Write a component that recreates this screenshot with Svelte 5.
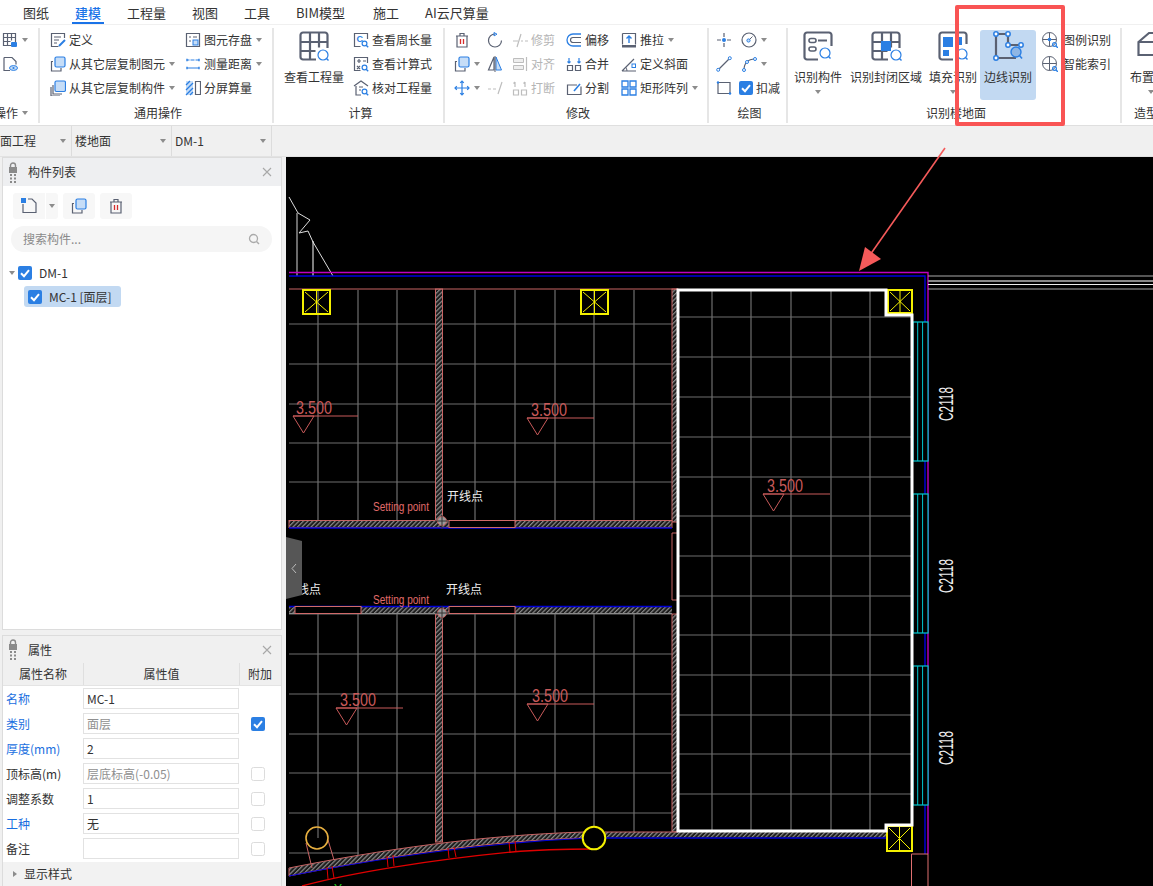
<script lang="ts">
    const D = "#5a6172";
    const B = "#2b7fe3";
    const L = "#c6ddf7";
    const G = "#bdbdbd";
    const line = (d: string, c = D, w = 1.2) =>
        `<path d="${d}" fill="none" stroke="${c}" stroke-width="${w}"/>`;
    const lens = (x: number, y: number, r = 2.4, c = B) =>
        `<circle cx="${x}" cy="${y}" r="${r}" fill="none" stroke="${c}" stroke-width="1.2"/>` +
        line(`M${x + r * 0.7} ${y + r * 0.7}l2 2`, c, 1.4);
    const frontBox = (x: number, y: number, s: number) =>
        `<rect x="${x}" y="${y}" width="${s}" height="${s}" rx="1.5" fill="${L}" stroke="${B}" stroke-width="1.2"/>`;

    // 16px ribbon icons
    const small: Record<string, string> = {
        gridlock:
            line("M1.5 1.5h12v12h-12zM5.5 1.5v12M9.5 1.5v7M1.5 5.5h12M1.5 9.5h7") +
            `<rect x="9" y="10" width="6" height="5" rx="1" fill="${B}"/>`,
        fileeye:
            line("M2 1.5h8l4 4v3M2 1.5v13h6") +
            `<ellipse cx="11.5" cy="12" rx="4" ry="2.4" fill="${L}" stroke="${B}"/><circle cx="11.5" cy="12" r="1.1" fill="${B}"/>`,
        define:
            line("M14.5 6V1.5h-13v13h7M4 5h7M4 8h5M4 11h3") +
            line("M9 14l6-6", B, 2),
        copyfloor:
            line("M3 5.5H1.5v9.5h9.5v-3") + frontBox(5, 1, 10),
        copycomp:
            line("M1 7v9h9M3 5v9h9") + frontBox(5, 1, 10.5),
        save:
            line("M1.5 1.5h13v13h-13zM4 5h2M8 5h4M4 9h2") +
            `<rect x="8" y="8" width="5" height="5" fill="${L}" stroke="${B}"/>`,
        measure:
            line("M2 4h12M2 12h12", B, 1) +
            line("M2 2.8v2.4M14 2.8v2.4M2 10.8v2.4M14 10.8v2.4", B, 1.4) +
            line("M4 4h2M9 4h2", "#fff", 1),
        split:
            `<rect x="1" y="1" width="7" height="14" fill="${L}"/>` +
            line("M1 5l4-4M1 10l7-7M1 15l7-7M5 15l3-3", B, 1.3) +
            line("M10.5 1.5h5v13h-5z"),
        perim:
            line("M14.5 7V1.5h-13v13h6") +
            `<text x="3.5" y="10" font-size="9" font-weight="700" font-family="Liberation Sans" fill="${B}">C</text>` +
            lens(11.5, 11.5),
        formula:
            line("M14.5 7V1.5h-13v13h6M4 5h4M6 3v4M4 10l3 3M7 10l-3 3M10 5h3") +
            lens(11.5, 11.5),
        house:
            line("M1 6l7-5 7 5M3 6v9h5M6 7h4M6 10h2") + lens(11.5, 11.5),
        trash:
            line("M2 4h12M6 4V1.5h4V4M3 4v11h10V4") +
            line("M6.5 7v5M9.5 7v5", "#d62b2b", 1.3),
        rotate:
            line("M8 2a6.5 6.5 0 1 0 6.5 6.5") + line("M7 .5l3 1.7-3 1.7z", B, 1),
        trim: line("M1 9h5M9 9h2M13 9h3M5 15L9 2", G),
        offset:
            line("M15 2H7a6 6 0 0 0 0 12h8", B, 1.3) +
            line("M15 5.5H7a2.5 2.5 0 0 0 0 5h8", D, 1.2),
        push:
            line("M1.5 1.5h13v11") +
            line("M1.5 1.5v11") +
            `<rect x="1" y="13" width="14" height="2.5" fill="${D}"/>` +
            line("M8 11V4M5.5 6.5L8 4l2.5 2.5", B, 1.4),
        copy: line("M3 5.5H1.5v9.5h9.5v-3") + frontBox(5, 1, 10),
        mirror:
            `<path d="M9 1l5.5 13H9z" fill="${L}" stroke="${B}"/>` +
            line("M7 1L1.5 14H7z") +
            line("M8 0v16", D, 1),
        align:
            line("M14.5 1v14", G) +
            `<path d="M1.5 2.5h10v4h-10zM1.5 9.5h10v4h-10z" fill="#eee" stroke="${G}"/>`,
        merge:
            line("M1.5 9.5h5v5h-5zM9.5 9.5h5v5h-5z") +
            line("M3 2v5M1.5 5.5L3 7l1.5-1.5M13 2v5M11.5 5.5L13 7l1.5-1.5", B, 1.2),
        slope:
            line("M1 15h14M1 15L13 3") +
            line("M6 15a6 6 0 0 0-1.5-4", D, 1) +
            `<rect x="11" y="8" width="3.5" height="3.5" fill="none" stroke="${B}"/>`,
        move:
            line("M8 1v14M1 8h14M6.2 2.8L8 1l1.8 1.8M6.2 13.2L8 15l1.8-1.8M2.8 6.2L1 8l1.8 1.8M13.2 6.2L15 8l-1.8 1.8", B, 1.2),
        extend: line("M1 9h3M6 9h3M11 14l4-12", G),
        breakIcon:
            line("M1.5 10h5v5h-5zM9.5 10h5v5h-5z", G) +
            line("M3 2v5M13 2v5M1.5 3.5L3 2M11.5 3.5L13 2", G),
        cut:
            line("M15 6.5v8H1.5v-9.5H11") + line("M8 11l6-7", B, 1.6),
        array:
            `<path d="M1 1h6v6H1zM9 1h6v6H9zM1 9h6v6H1zM9 9h6v6H9z" fill="#fff" stroke="${B}" stroke-width="1.3"/>`,
        point:
            line("M8 1v4M8 11v4M1 8h4M11 8h4", D, 1.2) +
            `<circle cx="8" cy="8" r="2" fill="${B}"/>`,
        circle:
            `<circle cx="8" cy="8" r="7" fill="none" stroke="${D}" stroke-width="1.2"/>` +
            line("M8 8l3.5-3.5", D, 1) +
            `<circle cx="7.5" cy="8.5" r="1.6" fill="${L}" stroke="${B}"/>`,
        lineIcon:
            line("M2 14L14 2") +
            `<circle cx="2.2" cy="13.8" r="1.5" fill="#fff" stroke="${B}"/><circle cx="13.8" cy="2.2" r="1.5" fill="#fff" stroke="${B}"/>`,
        arc:
            line("M3 14C3 7 7 3 14 3") +
            `<circle cx="3" cy="14" r="1.5" fill="#fff" stroke="${B}"/><circle cx="14" cy="3" r="1.5" fill="#fff" stroke="${B}"/><circle cx="6" cy="6" r="1.5" fill="#fff" stroke="${B}"/>`,
        rect:
            line("M2 2.5h12v11H2z") +
            `<circle cx="2" cy="2.5" r="1.2" fill="${B}"/><circle cx="14" cy="13.5" r="1.2" fill="${B}"/>`,
        legend:
            `<circle cx="7.5" cy="7.5" r="7" fill="none" stroke="${D}"/>` +
            line("M7.5 .5v14M.5 7.5h14", D, 1) +
            `<circle cx="7.5" cy="7.5" r="1.8" fill="${B}"/>` +
            lens(12.5, 12.5, 1.9),
        smart:
            `<circle cx="7.5" cy="7.5" r="7" fill="none" stroke="${D}"/>` +
            line("M7.5 .5v14M.5 7.5h14", D, 1) +
            lens(12.5, 12.5, 1.9),
    };

    // 31px ribbon icons
    const large: Record<string, string> = {
        grid:
            line("M1.5 4a2.5 2.5 0 0 1 2.5-2.5h22a2.5 2.5 0 0 1 2.5 2.5v13M1.5 4v22a2.5 2.5 0 0 0 2.5 2.5h13M1.5 11h27M1.5 20h15M11 1.5v27M20 1.5v15", D, 2.2) +
            lens(24, 24, 5, B),
        form:
            line("M28.5 15V4a2.5 2.5 0 0 0-2.5-2.5H4A2.5 2.5 0 0 0 1.5 4v22A2.5 2.5 0 0 0 4 28.5h11", D, 2.2) +
            `<rect x="6" y="7.5" width="7" height="4" rx="2" fill="none" stroke="${D}" stroke-width="1.6"/><rect x="6" y="16" width="7" height="4" rx="2" fill="none" stroke="${D}" stroke-width="1.6"/>` +
            line("M15 9.5h9", D, 2) +
            lens(22, 22, 5, B),
        gridfill:
            line("M1.5 4a2.5 2.5 0 0 1 2.5-2.5h22a2.5 2.5 0 0 1 2.5 2.5v13M1.5 4v22a2.5 2.5 0 0 0 2.5 2.5h13M1.5 11h27M1.5 20h15M11 1.5v27M20 1.5v15", D, 2.2) +
            `<rect x="10" y="10" width="10" height="10" fill="${B}"/>` +
            lens(25, 24, 5, B),
        fill:
            line("M28.5 13V4a2.5 2.5 0 0 0-2.5-2.5H4A2.5 2.5 0 0 0 1.5 4v22A2.5 2.5 0 0 0 4 28.5h11", D, 2.2) +
            `<rect x="5" y="6" width="10" height="10" fill="${B}"/><rect x="5" y="19" width="6" height="6" fill="${B}"/><rect x="20" y="6" width="4" height="8" fill="${B}"/>` +
            lens(24, 23, 5, B),
        edge:
            line("M3 3h12M3 3v24h20M15 3v11h13v2", D, 2.2) +
            `<circle cx="23" cy="21" r="5" fill="#8fb6e4" stroke="${B}" stroke-width="1.4"/>` +
            line("M26.5 24.5l2.5 3", B, 1.6) +
            [[3, 3], [15, 3], [15, 14], [28, 14], [3, 27]]
                .map(([x, y]) => `<circle cx="${x}" cy="${y}" r="2.2" fill="#fff" stroke="${B}" stroke-width="1.5"/>`)
                .join(""),
        cube: line("M1.5 11L12 2h18v22H1.5zM1.5 11H20v13M20 11L30 2", D, 2.2),
    };

    const rows = [
        { name: "名称", value: "MC-1", blue: true, muted: false, check: null },
        { name: "类别", value: "面层", blue: true, muted: true, check: true },
        { name: "厚度(mm)", value: "2", blue: true, muted: false, check: null },
        { name: "顶标高(m)", value: "层底标高(-0.05)", blue: false, muted: true, check: false },
        { name: "调整系数", value: "1", blue: false, muted: false, check: false },
        { name: "工种", value: "无", blue: true, muted: false, check: false },
        { name: "备注", value: "", blue: false, muted: false, check: false },
    ];

    const tabs = ["图纸", "建模", "工程量", "视图", "工具", "BIM模型", "施工", "AI云尺算量"];

    // drawing coordinates below are the page's own, see the svg viewBox
    const gridX = [318, 358, 397, 475, 515, 555, 594, 634];
    const upperY = [324, 364, 404, 443, 482, 522];
    const lowerY = [614, 654, 694, 734, 773, 813];
    const lowerEnd: Record<number, number> = { 318: 838, 358: 855, 397: 849, 475: 841, 515: 836, 555: 834, 594: 828, 634: 832 };
    const roomX = [712, 751, 791, 831, 870];
    const roomY = [317, 357, 397, 437, 477, 516, 556, 596, 635, 675, 715, 754, 794];
    const levels = [
        { x: 296, y: 414, lx: 293, lw: 65, ly: 416 },
        { x: 531, y: 416, lx: 527, lw: 67, ly: 418 },
        { x: 767, y: 492, lx: 763, lw: 67, ly: 494 },
        { x: 340, y: 706, lx: 336, lw: 67, ly: 708 },
        { x: 532, y: 702, lx: 527, lw: 67, ly: 704 },
    ];
    const columns = [
        [303, 290, 27, 24],
        [581, 290, 27, 24],
        [888, 290, 24, 23],
        [887, 826, 25, 25],
    ];
    const windows = [322, 494, 666];
    const mullions = [
        "M327 867l1 12M332 866l2 12",
        "M387 856l1 11M393 855l1 11",
        "M448 848l1 10M454 847l2 10",
        "M509 842l1 10M515 841l1 11",
    ];
</script>

{#snippet item(icon: string, label = "", caret = false, off = false)}
    <div class="item" class:off>
        <svg class="ico" viewBox="0 0 16 16">{@html small[icon]}</svg>
        {#if label}<span>{label}</span>{/if}
        {#if caret}<i class="caret"></i>{/if}
    </div>
{/snippet}

{#snippet big(icon: string, label: string, caret = false, active = false)}
    <div class="big" class:active>
        <svg class="big-ico" viewBox="0 0 31 31">{@html large[icon]}</svg>
        <span>{label}</span>
        {#if caret}<i class="caret"></i>{/if}
    </div>
{/snippet}

{#snippet panelHead(title: string)}
    <header class="panel-head">
        <svg class="grip" viewBox="0 0 10 21">
            <path d="M2.500 6V3.500a2.500 2.500 0 0 1 5 0V6" fill="none" stroke="#8a8a8a" stroke-width="1.4" />
            <rect x="1" y="5" width="8" height="6" fill="#8a8a8a" />
            <path d="M2 13h2M6 13h2M2 16.500h2M6 16.500h2M2 20h2M6 20h2" stroke="#8a8a8a" stroke-width="2" />
        </svg>
        <span>{title}</span>
        <svg class="close" viewBox="0 0 10 10"><path d="M1 1l8 8M9 1l-8 8" stroke="#a8a8a8" stroke-width="1.1" /></svg>
    </header>
{/snippet}

{#snippet tick(on = true)}
    <svg class="tick" viewBox="0 0 14 14">
        {#if on}
            <rect width="14" height="14" rx="2" fill="#2b7fe3" />
            <path d="M3 7.200l3 3 5-6" fill="none" stroke="#fff" stroke-width="2" />
        {:else}
            <rect x=".5" y=".5" width="13" height="13" rx="2" fill="#fff" stroke="#dcdcdc" />
        {/if}
    </svg>
{/snippet}

<div class="app">
    <nav class="tabs">
        {#each tabs as tab}
            <span class="tab" class:current={tab === "建模"} class:wide={tab === "BIM模型"}>{tab}</span>
        {/each}
    </nav>

    <section class="ribbon">
        <div class="group g-ops">
            <div class="body stack">
                {@render item("gridlock", "", true)}
                {@render item("fileeye")}
            </div>
            <div class="cap">操作<i class="caret"></i></div>
        </div>

        <div class="group g-common">
            <div class="body">
                <div class="stack c1">
                    {@render item("define", "定义")}
                    {@render item("copyfloor", "从其它层复制图元", true)}
                    {@render item("copycomp", "从其它层复制构件", true)}
                </div>
                <div class="stack">
                    {@render item("save", "图元存盘", true)}
                    {@render item("measure", "测量距离", true)}
                    {@render item("split", "分屏算量")}
                </div>
            </div>
            <div class="cap">通用操作</div>
        </div>

        <div class="group g-calc">
            <div class="body">
                {@render big("grid", "查看工程量")}
                <div class="stack">
                    {@render item("perim", "查看周长量")}
                    {@render item("formula", "查看计算式")}
                    {@render item("house", "核对工程量")}
                </div>
            </div>
            <div class="cap">计算</div>
        </div>

        <div class="group g-edit">
            <div class="body">
                <div class="stack e1">
                    {@render item("trash")}
                    {@render item("copy", "", true)}
                    {@render item("move", "", true)}
                </div>
                <div class="stack e2">
                    {@render item("rotate")}
                    {@render item("mirror")}
                    {@render item("extend", "", false, true)}
                </div>
                <div class="stack e3">
                    {@render item("trim", "修剪", false, true)}
                    {@render item("align", "对齐", false, true)}
                    {@render item("breakIcon", "打断", false, true)}
                </div>
                <div class="stack e4">
                    {@render item("offset", "偏移")}
                    {@render item("merge", "合并")}
                    {@render item("cut", "分割")}
                </div>
                <div class="stack">
                    {@render item("push", "推拉", true)}
                    {@render item("slope", "定义斜面")}
                    {@render item("array", "矩形阵列", true)}
                </div>
            </div>
            <div class="cap">修改</div>
        </div>

        <div class="group g-draw">
            <div class="body">
                <div class="stack d1">
                    {@render item("point")}
                    {@render item("lineIcon")}
                    {@render item("rect")}
                </div>
                <div class="stack">
                    {@render item("circle", "", true)}
                    {@render item("arc", "", true)}
                    <div class="item deduct">{@render tick()}<span>扣减</span></div>
                </div>
            </div>
            <div class="cap">绘图</div>
        </div>

        <div class="group g-recog">
            <div class="body">
                {@render big("form", "识别构件", true)}
                {@render big("gridfill", "识别封闭区域")}
                {@render big("fill", "填充识别", true)}
                {@render big("edge", "边线识别", false, true)}
                <div class="stack r1">
                    {@render item("legend", "图例识别")}
                    {@render item("smart", "智能索引")}
                </div>
            </div>
            <div class="cap">识别楼地面</div>
        </div>

        <div class="group g-shape">
            <div class="body">{@render big("cube", "布置", true)}</div>
            <div class="cap">造型</div>
        </div>
    </section>

    <div class="combos">
        <div class="combo first"><span>楼地面工程</span><i class="caret"></i></div>
        <div class="combo"><span>楼地面</span><i class="caret"></i></div>
        <div class="combo"><span>DM-1</span><i class="caret"></i></div>
    </div>

    <main class="main">
        <aside class="side">
            <section class="panel list">
                {@render panelHead("构件列表")}
                <div class="tools">
                    <div class="tool new">
                        <svg viewBox="0 0 16 16" class="tool-ico">
                            <path d="M2 6v8.500h13V5l-4-4H7" fill="none" stroke={D} stroke-width="1.2" />
                            <rect x="0" y="0" width="5" height="5" fill={B} />
                        </svg>
                    </div>
                    <div class="tool more"><i class="caret"></i></div>
                    <div class="tool"><svg viewBox="0 0 16 16" class="tool-ico">{@html small.copy}</svg></div>
                    <div class="tool"><svg viewBox="0 0 16 16" class="tool-ico">{@html small.trash}</svg></div>
                </div>
                <div class="search">
                    <span>搜索构件...</span>
                    <svg viewBox="0 0 12 12"><circle cx="5.500" cy="5.500" r="4" fill="none" stroke="#aaa" stroke-width="1.3" /><path d="M8.500 8.500l2.500 2.500" stroke="#aaa" stroke-width="1.4" /></svg>
                </div>
                <div class="tree">
                    <div class="node"><i class="caret"></i>{@render tick()}<span>DM-1</span></div>
                    <div class="node leaf">{@render tick()}<span>MC-1 [面层]</span></div>
                </div>
            </section>

            <section class="panel props">
                {@render panelHead("属性")}
                <div class="prop-head">
                    <span>属性名称</span><span>属性值</span><span>附加</span>
                </div>
                <div class="prop-rows">
                    {#each rows as row}
                        <div class="prop-row">
                            <span class="prop-name" class:blue={row.blue}>{row.name}</span>
                            <span class="prop-value" class:muted={row.muted}>{row.value}</span>
                            <span class="prop-check">
                                {#if row.check !== null}{@render tick(row.check)}{/if}
                            </span>
                        </div>
                    {/each}
                </div>
                <footer class="prop-foot"><i class="side-caret"></i>显示样式</footer>
            </section>
        </aside>

        <div class="canvas">
            <svg class="cad" viewBox="286 157 867 729" fill="none">
                <defs>
                    <pattern id="hatch" width="3.2" height="3.2" patternUnits="userSpaceOnUse" patternTransform="rotate(-45)">
                        <rect width="3.2" height="3.2" fill="#1c1c1c" />
                        <rect width="3.2" height="1.2" fill="#8a8a8a" />
                    </pattern>
                </defs>

                <!-- north marker -->
                <path d="M289 197l9 16 12 7-11 13 9-2 5 11 20 34" stroke="#ddd" />
                <path d="M297 213v63" stroke="#999" stroke-width="1.4" />
                <path d="M313 241v35" stroke="#fff" />

                <!-- outer lines -->
                <path d="M289 272.500h639V854" stroke="#c000c0" stroke-width="1.4" />
                <path d="M289 276h636v578" stroke="#0000e0" stroke-width="1.4" />
                <path d="M928 276h225M928 289h225" stroke="#aaa" />
                <path d="M928 281h225" stroke="#888" stroke-width="2" />
                <path d="M928 284.500h225" stroke="#eee" />

                <!-- floor grid -->
                <g stroke="#6e6e6e" stroke-width="1.2">
                    {#each gridX as x}
                        <path d="M{x} 290V522M{x} 614V{lowerEnd[x]}" />
                    {/each}
                    {#each upperY as y}
                        <path d="M289 {y}H672" />
                    {/each}
                    {#each lowerY as y}
                        <path d="M289 {y}H672" />
                    {/each}
                    <path d="M289 853h70" />
                    {#each roomX as x}
                        <path d="M{x} 290V830" />
                    {/each}
                    {#each roomY as y}
                        <path d="M678 {y}H912" />
                    {/each}
                </g>

                <!-- walls -->
                <g stroke="#c86464" fill="url(#hatch)">
                    <rect x="435.500" y="289" width="7" height="233" />
                    <rect x="672" y="289" width="6" height="233" />
                    <rect x="435.500" y="614" width="7" height="228" />
                    <rect x="672" y="614" width="6" height="218" />
                    <rect x="289" y="520.500" width="383" height="7" />
                    <path d="M289 868C380 850 480 835 585 832V838C480 841 380 858 289 876Z" />
                </g>
                <rect x="289" y="606" width="383" height="7" fill="url(#hatch)" />
                <rect x="605" y="832" width="281" height="5.500" fill="url(#hatch)" />
                <path d="M605 832h73" stroke="#c86464" />
                <path d="M289 289h389" stroke="#c86464" stroke-width="1.2" />
                <path d="M672 533h6v67h-6z" stroke="#c86464" />
                <path d="M289 613.500h383" stroke="#8a8a8a" />
                <path d="M289 528h383M289 606.500h383M605 838h281" stroke="#0000d8" stroke-width="1.4" />
                <path d="M289 876C380 858 480 843 590 838" stroke="#0000d8" stroke-width="1.2" />
                <g stroke="#d06a6a" fill="#000">
                    <rect x="449" y="520.500" width="66" height="7" />
                    <rect x="449" y="606.500" width="66" height="7" />
                    <rect x="295" y="606.500" width="66" height="7" />
                </g>
                <circle cx="442" cy="521" r="4.500" fill="#999" stroke="#c86464" />
                <circle cx="442" cy="613" r="4.500" fill="#999" stroke="#c86464" />
                <path d="M442 515v14M435 521h14M442 606v14M435 613h14" stroke="#333" />

                <!-- curved front -->
                <path d="M302 886C350 873 430 860 512 852C545 849 570 849 595 849" stroke="#e00000" stroke-width="1.3" />
                {#each mullions as d}
                    <path {d} stroke="#e00000" />
                {/each}
                <path d="M306 843l6 25M328 840l6 20" stroke="#c86464" />
                <circle cx="317" cy="838" r="11" stroke="#e8b040" stroke-width="1.6" />
                <circle cx="594" cy="838" r="11.300" fill="#000" stroke="#f4f000" stroke-width="2" />
                <text x="334" y="893" class="axis">Y</text>

                <!-- level marks -->
                {#each levels as l}
                    <text x={l.x} y={l.y} class="level" textLength="36" lengthAdjust="spacingAndGlyphs">3.500</text>
                    <path d="M{l.lx} {l.ly}h{l.lw}M{l.lx} {l.ly}h21l-10.500 17z" stroke="#c85a5a" />
                {/each}

                <!-- columns -->
                {#each columns as [x, y, w, h]}
                    <rect {x} {y} width={w} height={h} stroke="#f4f000" stroke-width="2" />
                    <path d="M{x + 2} {y + 2}l{w - 4} {h - 4}M{x + w - 2} {y + 2}l{4 - w} {h - 4}M{x + w / 2} {y}v{h}" stroke="#f4f000" />
                {/each}

                <!-- windows -->
                {#each windows as y}
                    <rect x="913" {y} width="15" height="139" fill="#000" stroke="#00c8d0" stroke-width="1.2" />
                    <path d="M917.700 {y}v139M922.600 {y}v139" stroke="#00c8d0" />
                    <text class="tag" transform="translate(953 {y + 99}) rotate(-90)" textLength="34" lengthAdjust="spacingAndGlyphs">C2118</text>
                {/each}
                <path d="M911.500 886V854h16.500v32" stroke="#e07070" />

                <!-- picked outline -->
                <path d="M678 290H886V315H912V825H886V831H678Z" stroke="#fff" stroke-width="3" />

                <!-- texts -->
                <text x="373" y="511" class="note" textLength="56" lengthAdjust="spacingAndGlyphs">Setting point</text>
                <text x="373" y="604" class="note" textLength="56" lengthAdjust="spacingAndGlyphs">Setting point</text>
                <text x="447" y="501" class="cn">开线点</text>
                <text x="446" y="594" class="cn">开线点</text>
                <text x="285" y="594" class="cn">开线点</text>

                <!-- collapse handle -->
                <path d="M286 537l16 4v54l-16 4z" fill="#565656" />
                <path d="M296 564l-4 4.500 4 4.500" stroke="#bbb" />
            </svg>
        </div>
    </main>

    <!-- annotation drawn over the screenshot -->
    <div class="mark-box"></div>
    <svg class="mark-arrow" viewBox="0 0 1153 886" fill="none">
        <path d="M945 148L870 255" stroke="#f55a5a" stroke-width="1.6" />
        <path d="M859 271l6-24 16 12z" fill="#f55a5a" />
    </svg>
</div>

<style>
    :global(body) {
        margin: 0;
        background: #fff;
    }

    .app {
        position: relative;
        width: 1153px;
        height: 886px;
        overflow: hidden;
        display: flex;
        flex-direction: column;
        color: #333;
        font: 12px/16px "Noto Sans CJK SC", "Noto Sans", sans-serif;
    }

    .tabs {
        height: 24px;
        flex: none;
        display: flex;
        gap: 26px;
        padding-left: 23px;
        border-bottom: 1px solid #f0f0f0;
        font-size: 13px;
    }

    .tab {
        position: relative;
        line-height: 25px;
    }

    .tab.wide {
        padding-right: 2px;
    }

    .tab.current {
        color: #1a73e8;
        font-weight: 500;
    }

    .tab.current::after {
        content: "";
        position: absolute;
        left: -3px;
        right: -3px;
        bottom: 0;
        height: 2px;
        background: #1a73e8;
    }

    .caret {
        flex: none;
        display: inline-block;
        width: 0;
        height: 0;
        border: 3.5px solid transparent;
        border-top: 4px solid #8c8c8c;
        border-bottom: 0;
    }

    .ribbon {
        height: 100px;
        flex: none;
        display: flex;
        border-bottom: 1px solid #dfdfdf;
        overflow: hidden;
    }

    .group {
        flex: none;
        height: 95px;
        margin-top: 3px;
        display: flex;
        flex-direction: column;
        border-right: 2px solid #e6e6e6;
        box-sizing: border-box;
    }

    .group:last-child {
        border-right: 0;
    }

    .body {
        height: 75px;
        flex: none;
        display: flex;
    }

    .cap {
        text-align: center;
        padding-left: 4px;
        line-height: 20px;
        white-space: nowrap;
    }

    .stack {
        display: flex;
        flex-direction: column;
    }

    .item {
        height: 24px;
        display: flex;
        align-items: center;
        gap: 3px;
        white-space: nowrap;
    }

    .item .caret {
        margin-left: 1px;
    }

    .ico {
        width: 16px;
        height: 16px;
        flex: none;
    }

    .off {
        color: #b5b5b5;
    }

    .big {
        height: 70px;
        margin-top: 2px;
        padding-top: 1px;
        display: flex;
        flex-direction: column;
        align-items: center;
        box-sizing: border-box;
        border-radius: 3px;
        white-space: nowrap;
    }

    .big.active {
        background: #c2d9f2;
    }

    .big-ico {
        width: 31px;
        height: 31px;
        margin-bottom: 7px;
    }

    .big .caret {
        margin-top: 5px;
    }

    .g-ops {
        width: 40px;
    }

    .g-ops .body {
        padding-left: 2px;
    }

    .g-ops .cap {
        padding-left: 0;
        margin-left: -6px;
        display: flex;
        align-items: center;
        gap: 4px;
    }

    .g-common {
        width: 234px;
    }

    .g-common .body {
        padding-left: 10px;
    }

    .c1 {
        width: 135px;
    }

    .g-calc {
        width: 171px;
    }

    .g-calc .body {
        padding-left: 9px;
    }

    .g-calc .big {
        width: 62px;
        margin-right: 8px;
    }

    .g-edit {
        width: 264px;
    }

    .g-edit .body {
        padding-left: 9px;
    }

    .e1 {
        width: 33px;
    }

    .e2 {
        width: 25px;
    }

    .e3 {
        width: 54px;
    }

    .e4 {
        width: 55px;
    }

    .g-draw {
        width: 79px;
    }

    .g-draw .body {
        padding-left: 7px;
    }

    .d1 {
        width: 25px;
    }

    .deduct {
        margin-left: -2px;
    }

    .tick {
        width: 14px;
        height: 14px;
        flex: none;
    }

    .g-recog {
        width: 334px;
    }

    .g-recog .body {
        padding-left: 6px;
        gap: 7px;
    }

    .g-recog .big:first-child {
        width: 48px;
        margin-right: 1px;
    }

    .g-recog .big.active {
        width: 56px;
        margin-left: -4px;
        padding: 1px 4px 0;
    }

    .r1 {
        margin-left: -1px;
    }

    .r1 .item {
        gap: 5px;
    }

    .g-shape {
        width: 40px;
    }

    .g-shape .body {
        padding-left: 8px;
    }

    .g-shape .big {
        align-items: flex-start;
    }

    .g-shape .big-ico {
        margin-left: 7px;
    }

    .g-shape .big .caret {
        margin-left: 18px;
    }

    .g-shape .cap {
        text-align: left;
        padding-left: 12px;
    }

    .combos {
        height: 30px;
        flex: none;
        display: flex;
        background: #f0f0f0;
    }

    .combo {
        width: 100px;
        display: flex;
        align-items: center;
        justify-content: space-between;
        box-sizing: border-box;
        padding: 0 5px 0 3px;
        border-right: 1px solid #dcdcdc;
        white-space: nowrap;
        overflow: hidden;
    }

    .combo.first {
        width: 72px;
        padding-left: 0;
    }

    .combo.first span {
        margin-left: -24px;
    }

    .main {
        flex: 1;
        min-height: 0;
        display: flex;
        border-top: 1px solid #e2e2e2;
    }

    .side {
        width: 286px;
        flex: none;
        display: flex;
        flex-direction: column;
        gap: 5px;
        padding: 0 4px 0 2px;
        box-sizing: border-box;
        background: #f0f0f0;
    }

    .panel {
        background: #fff;
        border: 1px solid #dcdcdc;
        border-bottom: 0;
        display: flex;
        flex-direction: column;
        min-height: 0;
    }

    .list {
        flex: 1;
        border-bottom: 1px solid #dcdcdc;
    }

    .props {
        height: 251px;
        flex: none;
        box-sizing: border-box;
    }

    .panel-head {
        height: 28px;
        flex: none;
        display: flex;
        align-items: center;
        padding: 0 9px 0 5px;
        background: #eeeff1;
    }

    .props .panel-head {
        height: 27px;
        background: #f0f0f0;
    }

    .panel-head span {
        margin-left: 10px;
        flex: 1;
    }

    .grip {
        width: 10px;
        height: 21px;
    }

    .close {
        width: 10px;
        height: 10px;
    }

    .tools {
        display: flex;
        padding: 7px 0 0 10px;
    }

    .tool {
        width: 32px;
        height: 26px;
        margin-right: 5px;
        display: flex;
        align-items: center;
        justify-content: center;
        background: #f7f7f7;
        border-radius: 3px;
    }

    .tool.new {
        margin-right: 1px;
        border-radius: 3px 0 0 3px;
    }

    .tool.more {
        width: 12px;
        border-radius: 0 3px 3px 0;
    }

    .tool-ico {
        width: 16px;
        height: 16px;
    }

    .search {
        height: 26px;
        margin: 7px 9px 0 8px;
        padding: 0 12px;
        display: flex;
        align-items: center;
        justify-content: space-between;
        background: #f5f5f5;
        border-radius: 13px;
        color: #8a8a8a;
    }

    .search svg {
        width: 12px;
        height: 12px;
    }

    .tree {
        padding-top: 9px;
    }

    .node {
        height: 24px;
        display: flex;
        align-items: center;
        padding-left: 6px;
        gap: 7px;
    }

    .node .caret {
        margin-right: -4px;
    }

    .leaf {
        width: 97px;
        height: 21px;
        margin: 1px 0 0 21px;
        padding-left: 4px;
        box-sizing: border-box;
        background: #c2d9f2;
        border-radius: 3px;
    }

    .prop-head {
        height: 22px;
        flex: none;
        display: grid;
        grid-template-columns: 80px 156px 41px;
        background: #f0f0f0;
        border-bottom: 1px solid #e4e4e4;
        text-align: center;
        line-height: 22px;
    }

    .prop-head span + span {
        border-left: 1px solid #dfdfdf;
    }

    .prop-rows {
        flex: 1;
    }

    .prop-row {
        height: 25px;
        display: grid;
        grid-template-columns: 80px 156px 41px;
        align-items: center;
    }

    .prop-name {
        padding-left: 3px;
    }

    .blue {
        color: #1a6fe0;
    }

    .prop-value {
        height: 21px;
        box-sizing: border-box;
        border: 1px solid #e2e2e2;
        padding-left: 3px;
        line-height: 19px;
    }

    .muted {
        color: #8f8f8f;
    }

    .prop-check {
        display: flex;
        justify-content: center;
        padding-right: 3px;
    }

    .prop-foot {
        height: 24px;
        flex: none;
        display: flex;
        align-items: center;
        gap: 7px;
        padding-left: 10px;
        background: #f2f2f2;
    }

    .side-caret {
        width: 0;
        height: 0;
        border: 3.5px solid transparent;
        border-left: 4px solid #8c8c8c;
        border-right: 0;
    }

    .canvas {
        flex: 1;
        min-width: 0;
        background: #000;
    }

    .cad {
        display: block;
        width: 867px;
        height: 729px;
    }

    .level {
        fill: #c85a5a;
        font: 18px "Liberation Sans", sans-serif;
    }

    .note {
        fill: #e06a6a;
        font: 13px "Liberation Sans", sans-serif;
    }

    .cn {
        fill: #eee;
        font: 12px "Noto Sans CJK SC", sans-serif;
    }

    .tag {
        fill: #eee;
        font: 21px "Liberation Sans", sans-serif;
    }

    .axis {
        fill: #20d020;
        font: 12px "Liberation Sans", sans-serif;
    }

    .mark-box {
        position: absolute;
        left: 955px;
        top: 5px;
        width: 110px;
        height: 121px;
        box-sizing: border-box;
        border: 4px solid #f95454;
        border-radius: 2px;
    }

    .mark-arrow {
        position: absolute;
        inset: 0;
        width: 1153px;
        height: 886px;
        pointer-events: none;
    }
</style>
